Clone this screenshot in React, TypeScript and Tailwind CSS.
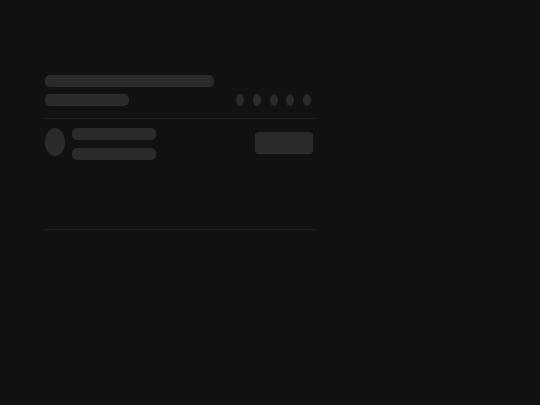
export default function App() {
  return (
    <main className="min-h-screen w-full bg-[#111111] pt-[75px]">
      <div className="ml-[45px] w-[270px]">
        {/* header skeleton */}
        <div className="h-3 w-[169px] rounded-[5px] bg-[#2b2b2b]" />
        <div className="mt-[7px] flex items-center justify-between">
          <div className="h-3 w-[84px] rounded-[5px] bg-[#2b2b2b]" />
          <div className="mr-[4px] flex gap-[8.75px]">
            {[0, 1, 2, 3, 4].map((i) => (
              <div key={i} className="h-3 w-2 rounded-[50%] bg-[#2b2b2b]" />
            ))}
          </div>
        </div>

        <div className="mt-3 h-px w-full bg-[#1f1f1f]" />

        {/* item skeleton */}
        <div className="mt-[9px] flex items-start justify-between">
          <div className="flex items-start gap-[7px]">
            <div className="h-7 w-5 rounded-[50%] bg-[#2b2b2b]" />
            <div className="flex flex-col gap-2">
              <div className="h-3 w-[84px] rounded-[5px] bg-[#2b2b2b]" />
              <div className="h-3 w-[84px] rounded-[5px] bg-[#2b2b2b]" />
            </div>
          </div>
          <div className="mr-[2px] mt-1 h-[22px] w-[58px] rounded-[4px] bg-[#2b2b2b]" />
        </div>

        <div className="mt-[69px] h-px w-full bg-[#1f1f1f]" />
      </div>
    </main>
  );
}
